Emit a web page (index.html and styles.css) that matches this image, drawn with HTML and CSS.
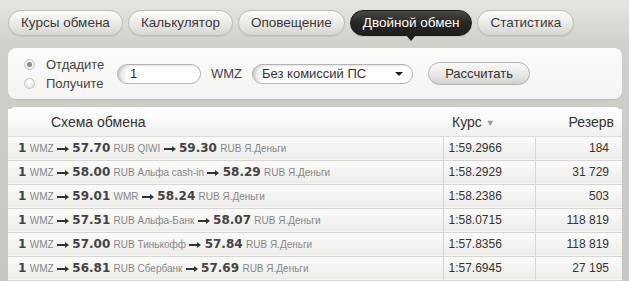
FILE: index.html
```html
<!DOCTYPE html>
<html lang="ru">
<head>
    <meta charset="UTF-8">
    <title>Двойной обмен</title>
    <link rel="stylesheet" href="styles.css">
</head>
<body>
    <div class="page">
        <div class="tabs">
            <div class="tab">Курсы обмена</div>
            <div class="tab">Калькулятор</div>
            <div class="tab">Оповещение</div>
            <div class="tab active">Двойной обмен</div>
            <div class="tab">Статистика</div>
        </div>

        <div class="form-panel">
            <div class="radios">
                <label class="radio-row"><span class="radio checked"></span>Отдадите</label>
                <label class="radio-row"><span class="radio"></span>Получите</label>
            </div>
            <div class="field amount">1</div>
            <span class="currency">WMZ</span>
            <div class="field select">Без комиссий ПС<span class="caret"></span></div>
            <button class="calc-button">Рассчитать</button>
        </div>

        <div class="table-panel">
            <table class="rates">
                <thead>
                    <tr>
                        <th class="scheme">Схема обмена</th>
                        <th class="rate">Курс <span class="sort">&#9660;</span></th>
                        <th class="reserve">Резерв</th>
                    </tr>
                </thead>
                <tbody>
                    <tr>
                        <td class="scheme"><b>1</b> <small>WMZ</small> <i class="arrow"></i> <b>57.70</b> <small>RUB QIWI</small> <i class="arrow"></i> <b>59.30</b> <small>RUB Я.Деньги</small></td>
                        <td class="rate">1:59.2966</td>
                        <td class="reserve">184</td>
                    </tr>
                    <tr>
                        <td class="scheme"><b>1</b> <small>WMZ</small> <i class="arrow"></i> <b>58.00</b> <small>RUB Альфа cash-in</small> <i class="arrow"></i> <b>58.29</b> <small>RUB Я.Деньги</small></td>
                        <td class="rate">1:58.2929</td>
                        <td class="reserve">31 729</td>
                    </tr>
                    <tr>
                        <td class="scheme"><b>1</b> <small>WMZ</small> <i class="arrow"></i> <b>59.01</b> <small>WMR</small> <i class="arrow"></i> <b>58.24</b> <small>RUB Я.Деньги</small></td>
                        <td class="rate">1:58.2386</td>
                        <td class="reserve">503</td>
                    </tr>
                    <tr>
                        <td class="scheme"><b>1</b> <small>WMZ</small> <i class="arrow"></i> <b>57.51</b> <small>RUB Альфа-Банк</small> <i class="arrow"></i> <b>58.07</b> <small>RUB Я.Деньги</small></td>
                        <td class="rate">1:58.0715</td>
                        <td class="reserve">118 819</td>
                    </tr>
                    <tr>
                        <td class="scheme"><b>1</b> <small>WMZ</small> <i class="arrow"></i> <b>57.00</b> <small>RUB Тинькофф</small> <i class="arrow"></i> <b>57.84</b> <small>RUB Я.Деньги</small></td>
                        <td class="rate">1:57.8356</td>
                        <td class="reserve">118 819</td>
                    </tr>
                    <tr>
                        <td class="scheme"><b>1</b> <small>WMZ</small> <i class="arrow"></i> <b>56.81</b> <small>RUB Сбербанк</small> <i class="arrow"></i> <b>57.69</b> <small>RUB Я.Деньги</small></td>
                        <td class="rate">1:57.6945</td>
                        <td class="reserve">27 195</td>
                    </tr>
                </tbody>
            </table>
        </div>
    </div>
</body>
</html>
```

FILE: styles.css
```css
* {
    margin: 0;
    padding: 0;
    box-sizing: border-box;
}

body {
    font-family: "Liberation Sans", Arial, sans-serif;
    background: linear-gradient(#e6e7e2, #cfd0c9 45px, #c6c7c0);
    color: #333;
    overflow: hidden;
}

.page {
    padding: 10px 7px 0 8px;
}

/* tabs */

.tabs {
    display: flex;
    gap: 5px;
    height: 26px;
}

.tab {
    position: relative;
    padding: 0 12px;
    height: 26px;
    line-height: 24px;
    font-size: 13.5px;
    color: #3a3a3a;
    border: 1px solid #bdbdb6;
    border-radius: 13px;
    background: linear-gradient(#fdfdfb, #e9e9e5 55%, #d6d6d1);
    box-shadow: 0 1px 1px rgba(0, 0, 0, 0.08);
}

.tab.active {
    color: #fff;
    border-color: #1c1c1a;
    background: linear-gradient(#4a4a46, #262624 50%, #1e1e1c);
}

.tab.active::after {
    content: "";
    position: absolute;
    left: 50%;
    bottom: -6px;
    margin-left: -5px;
    border-left: 5px solid transparent;
    border-right: 5px solid transparent;
    border-top: 6px solid #1e1e1c;
}

/* form */

.form-panel {
    display: flex;
    align-items: center;
    margin-top: 12px;
    height: 51px;
    padding: 0 12px 0 16px;
    background: linear-gradient(#fbfbfa, #f4f4f2);
    border-radius: 8px;
    box-shadow: 0 1px 1px rgba(0, 0, 0, 0.1);
    font-size: 13px;
}

.radios {
    display: flex;
    flex-direction: column;
    gap: 4px;
    width: 93px;
}

.radio-row {
    display: flex;
    align-items: center;
    gap: 11px;
    height: 15px;
    color: #444;
}

.radio {
    width: 11px;
    height: 11px;
    border-radius: 50%;
    border: 1px solid #c4c4c0;
    background: radial-gradient(circle at 50% 35%, #ffffff, #e2e2de);
    position: relative;
}

.radio.checked::after {
    content: "";
    position: absolute;
    left: 2px;
    top: 2px;
    width: 5px;
    height: 5px;
    border-radius: 50%;
    background: #8a8a86;
}

.field {
    height: 20px;
    line-height: 18px;
    border: 1px solid #b4b4ae;
    border-radius: 10px;
    background: linear-gradient(90deg, #e4e4e0, #ffffff 12px);
    box-shadow: inset 2px 1px 2px rgba(0, 0, 0, 0.12);
    color: #333;
    font-size: 13px;
}

.amount {
    width: 84px;
    padding-left: 12px;
}

.currency {
    margin: 0 10px 0 10px;
    color: #444;
}

.select {
    position: relative;
    width: 161px;
    padding-left: 9px;
}

.caret {
    position: absolute;
    right: 9px;
    top: 7px;
    border-left: 4px solid transparent;
    border-right: 4px solid transparent;
    border-top: 4px solid #222;
}

.calc-button {
    margin-left: 15px;
    width: 102px;
    height: 23px;
    border: 1px solid #b4b4ae;
    border-radius: 12px;
    background: linear-gradient(#fafaf8, #e6e6e2 60%, #d2d2cd);
    font-family: "Liberation Sans", Arial, sans-serif;
    font-size: 13px;
    color: #333;
}

/* table */

.table-panel {
    margin-top: 8px;
    background: #fff;
    border-radius: 8px 8px 0 0;
    padding-top: 2px;
    box-shadow: 0 1px 1px rgba(0, 0, 0, 0.1);
}

.rates {
    width: 100%;
    border-collapse: collapse;
}

.rates th {
    height: 27px;
    font-weight: normal;
    font-size: 14px;
    color: #333;
    text-align: left;
    background: linear-gradient(#ffffff, #f1f1ef);
    border-bottom: 1px solid #dcdcd8;
}

.rates th.scheme {
    padding-left: 43px;
}

.rates th.rate {
    padding-left: 9px;
}

.rates th.reserve {
    text-align: right;
    padding-right: 8px;
}

.sort {
    font-size: 9px;
    color: #999;
    vertical-align: 1px;
}

.rates td {
    height: 24px;
    font-size: 12px;
    color: #333;
    background: linear-gradient(#fbfbfa, #ecece9);
    border-bottom: 1px solid #d6d6d2;
}

.rates td.scheme {
    width: 435px;
    padding-left: 10px;
    color: #333;
}

.rates td.rate {
    width: 92px;
    padding-left: 5px;
    border-left: 1px solid #d6d6d2;
}

.rates td.reserve {
    text-align: right;
    padding-right: 13px;
    border-left: 1px solid #d6d6d2;
}

.rates b {
    font-family: "DejaVu Sans", Verdana, sans-serif;
    font-size: 12px;
    color: #444;
}

.arrow {
    position: relative;
    display: inline-block;
    width: 8px;
    height: 2px;
    margin-right: 4px;
    background: #333;
    vertical-align: middle;
}

.arrow::after {
    content: "";
    position: absolute;
    right: -4px;
    top: -2px;
    border-top: 3px solid transparent;
    border-bottom: 3px solid transparent;
    border-left: 4px solid #333;
}

.rates small {
    font-size: 10px;
    color: #888;
}
```
